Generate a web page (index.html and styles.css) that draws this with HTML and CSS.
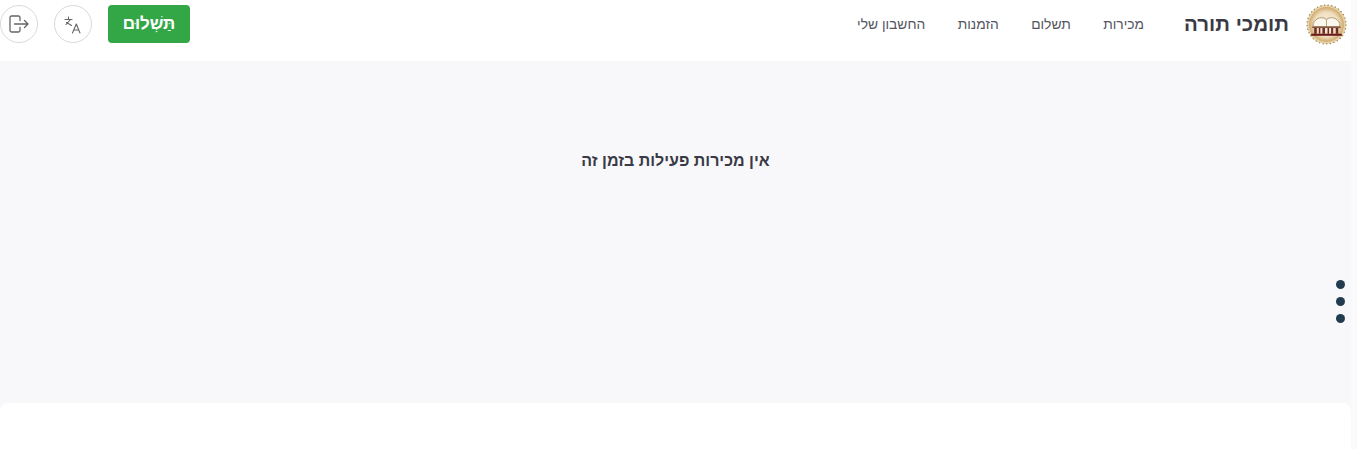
FILE: index.html
```html
<!DOCTYPE html>
<html lang="he" dir="rtl">
  <head>
    <meta charset="UTF-8" />
    <meta name="viewport" content="width=device-width, initial-scale=1.0" />
    <title>תומכי תורה</title>
    <link rel="stylesheet" href="styles.css">
  </head>
  <body>
    <div class="page">
      <header class="topbar">
        <a class="brand" href="#">
          <svg class="logo" viewBox="0 0 40 40" aria-hidden="true">
            <defs>
              <radialGradient id="logo-bg" cx="50%" cy="50%" r="50%">
                <stop offset="0" stop-color="#f8f0de" />
                <stop offset="0.7" stop-color="#f0dfbf" />
                <stop offset="1" stop-color="#cfa96c" />
              </radialGradient>
            </defs>
            <circle cx="20" cy="20" r="19" fill="#e6d3ab" stroke="#9c8355" stroke-width="1.200" stroke-dasharray="1.200 2.400" />
            <circle cx="20" cy="20" r="17" fill="url(#logo-bg)" />
            <path d="M7 19c3-6 9-7 13-4 4-3 10-2 13 4v3H7z" fill="#fbf7ec" stroke="#a8956f" stroke-width="0.900" />
            <path d="M20 15v7" stroke="#a8956f" stroke-width="0.800" />
            <path d="M6 22h28v1.500H6z" fill="#8a5a48" />
            <path d="M8 23.500h2.500V29H8zM12.500 23.500h1.500V29h-1.500zM16 23.500h2.500V29H16zM21 23.500h1.500V29H21zM24.500 23.500h2V29h-2zM29 23.500h2.500V29H29z" fill="#6f2a26" />
            <path d="M5 29h30v2H5z" fill="#6a1a18" />
          </svg>
          <span class="brand-name">תומכי תורה</span>
        </a>
        <nav class="nav">
          <a href="#">מכירות</a>
          <a href="#">תשלום</a>
          <a href="#">הזמנות</a>
          <a href="#">החשבון שלי</a>
        </nav>
        <div class="actions">
          <a class="pay-btn" href="#">תַּשְׁלוּם</a>
          <button class="round-btn" type="button" aria-label="שפה">
            <svg viewBox="0 0 20 20" width="20" height="20" fill="none" stroke="#666" stroke-width="1.100" stroke-linecap="round" stroke-linejoin="round">
              <path d="M2 5.500h7M5.500 3v2.500M7.500 5.500 3 10.500M3.500 8.500 8.500 11.500" />
              <path d="M9.500 19l3.800-9 3.700 9M10.800 16h5" />
            </svg>
          </button>
          <button class="round-btn" type="button" aria-label="יציאה">
            <svg viewBox="0 0 20 20" width="20" height="20" fill="none" stroke="#666" stroke-width="1.300" stroke-linecap="round" stroke-linejoin="round">
              <path d="M11 6.500V3.500A1.500 1.500 0 0 0 9.500 2H2.500A1.500 1.500 0 0 0 1 3.500v13A1.500 1.500 0 0 0 2.500 18h7a1.500 1.500 0 0 0 1.500-1.500v-3" />
              <path d="M5.500 10H19M15.500 6.500 19 10l-3.500 3.500" />
            </svg>
          </button>
        </div>
      </header>

      <main class="content">
        <h2 class="empty-msg">אין מכירות פעילות בזמן זה</h2>
        <div class="dots">
          <span></span>
          <span></span>
          <span></span>
        </div>
      </main>

      <footer class="footer"></footer>
    </div>
  </body>
</html>
```

FILE: styles.css
```css
* {
  box-sizing: border-box;
}
html,
body {
  height: 100%;
}
body {
  margin: 0;
  overflow: hidden;
  font-family: "Liberation Sans", sans-serif;
  color: #3a3a46;
  background-color: #fafafa;
}
a {
  color: inherit;
  text-decoration: none;
}
.page {
  width: 1351px;
  height: 449px;
  margin-right: 6px;
  display: flex;
  flex-direction: column;
  background-color: #f8f8fb;
}
.topbar {
  height: 61px;
  flex: none;
  display: flex;
  align-items: flex-start;
  padding: 5px 4px 0 0;
  background-color: #fff;
}
.brand {
  display: flex;
  align-items: center;
  gap: 17px;
  height: 38px;
}
.logo {
  width: 41px;
  height: 41px;
  display: block;
  flex: none;
}
.brand-name {
  font-size: 20.5px;
  font-weight: 700;
  color: #3a3a46;
}
.nav {
  display: flex;
  gap: 32.5px;
  height: 38px;
  align-items: center;
  margin-right: 40px;
  font-size: 13.8px;
  color: #555560;
}
.actions {
  display: flex;
  gap: 16px;
  margin-right: auto;
}
.pay-btn {
  width: 82px;
  height: 38px;
  display: flex;
  align-items: center;
  justify-content: center;
  border-radius: 4px;
  background-color: #33a745;
  color: #fff;
  font-size: 17px;
  font-weight: 700;
}
.round-btn {
  width: 38px;
  height: 38px;
  padding: 0;
  display: flex;
  align-items: center;
  justify-content: center;
  border: 1px solid #d9d9d9;
  border-radius: 50%;
  background-color: #fff;
}
.content {
  position: relative;
  height: 342px;
  flex: none;
  padding-top: 89px;
  background-color: #f8f8fb;
}
.empty-msg {
  margin: 0;
  text-align: center;
  font-size: 16px;
  font-weight: 700;
  line-height: 22px;
  color: #3a3a46;
}
.dots {
  position: absolute;
  top: 218.5px;
  right: 6px;
  display: flex;
  flex-direction: column;
  gap: 8px;
}
.dots span {
  width: 9px;
  height: 9px;
  border-radius: 50%;
  background-color: #223c4f;
}
.footer {
  flex: 1;
  background-color: #fff;
  border-radius: 8px 8px 0 0;
}
```
